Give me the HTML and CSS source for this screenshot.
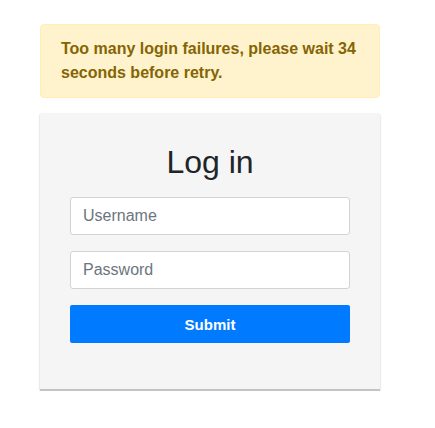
FILE: index.html
```html
<!DOCTYPE html>
<html lang="en">
<head>
<meta charset="utf-8">
<title>Log in</title>
<link rel="stylesheet" href="styles.css">
</head>
<body>
<div class="page">
  <div class="alert">Too many login failures, please wait 34 seconds before retry.</div>
  <div class="card">
    <h2 class="title">Log in</h2>
    <form class="form">
      <input class="field" type="text" placeholder="Username">
      <input class="field" type="password" placeholder="Password">
      <button class="submit" type="button">Submit</button>
    </form>
  </div>
</div>
</body>
</html>
```
FILE: styles.css
```css
* { box-sizing: border-box; }
html, body { margin: 0; padding: 0; background: #fff; }
body {
  font-family: "Liberation Sans", Arial, sans-serif;
  font-size: 16px;
  line-height: 1.5;
  color: #212529;
}
.page {
  width: 340px;
  margin: 24px 0 0 40px;
}
.alert {
  background: #fff3cd;
  border: 1px solid #ffeeba;
  border-radius: 4px;
  color: #856404;
  font-weight: bold;
  padding: 12px 20px;
  margin-bottom: 16px;
}
.card {
  background: #f5f5f5;
  padding: 29px 30px 46px;
  border-bottom: 2px solid #c4c4c4;
  box-shadow: 0 1px 2px rgba(0,0,0,0.15), 0 0 2px rgba(0,0,0,0.1);
}
.title {
  margin: 0 0 16px;
  font-size: 32px;
  font-weight: normal;
  line-height: 38px;
  text-align: center;
  color: #212529;
}
.form {
  display: flex;
  flex-direction: column;
  gap: 16px;
}
.field {
  display: block;
  width: 100%;
  height: 38px;
  padding: 6px 12px;
  font-family: inherit;
  font-size: 16px;
  color: #495057;
  background: #fff;
  border: 1px solid #ced4da;
  border-radius: 3px;
  outline: none;
}
.field::placeholder { color: #6c757d; opacity: 1; }
.submit {
  display: block;
  width: 100%;
  height: 38px;
  font-family: inherit;
  font-size: 15px;
  font-weight: bold;
  color: #fff;
  background: #007bff;
  border: 0;
  border-radius: 2px;
}
```
